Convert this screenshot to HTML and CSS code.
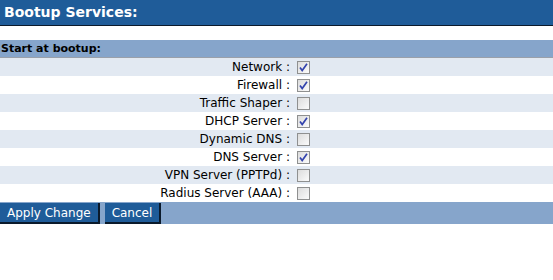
FILE: index.html
```html
<!DOCTYPE html>
<html lang="en">
<head>
    <meta charset="UTF-8">
    <title>Bootup Services</title>
    <link rel="stylesheet" href="styles.css">
</head>
<body>
    <div class="page-title">Bootup Services:</div>

    <form class="services">
        <div class="section-head">Start at bootup:</div>

        <div class="row">
            <label class="name">Network :</label>
            <span class="check on"><svg viewBox="0 0 11 11"><path d="M2 5.5 L4.2 8.5 L9 1.8" /></svg></span>
        </div>
        <div class="row">
            <label class="name">Firewall :</label>
            <span class="check on"><svg viewBox="0 0 11 11"><path d="M2 5.5 L4.2 8.5 L9 1.8" /></svg></span>
        </div>
        <div class="row">
            <label class="name">Traffic Shaper :</label>
            <span class="check"></span>
        </div>
        <div class="row">
            <label class="name">DHCP Server :</label>
            <span class="check on"><svg viewBox="0 0 11 11"><path d="M2 5.5 L4.2 8.5 L9 1.8" /></svg></span>
        </div>
        <div class="row">
            <label class="name">Dynamic DNS :</label>
            <span class="check"></span>
        </div>
        <div class="row">
            <label class="name">DNS Server :</label>
            <span class="check on"><svg viewBox="0 0 11 11"><path d="M2 5.5 L4.2 8.5 L9 1.8" /></svg></span>
        </div>
        <div class="row">
            <label class="name">VPN Server (PPTPd) :</label>
            <span class="check"></span>
        </div>
        <div class="row">
            <label class="name">Radius Server (AAA) :</label>
            <span class="check"></span>
        </div>

        <div class="actions">
            <button type="button" class="btn">Apply Change</button>
            <button type="button" class="btn">Cancel</button>
        </div>
    </form>
</body>
</html>
```

FILE: styles.css
```css
* {
    margin: 0;
    padding: 0;
    box-sizing: border-box;
}

body {
    font-family: "DejaVu Sans", Verdana, sans-serif;
    font-size: 12px;
    color: #000;
    background: #fff;
}

.page-title {
    height: 26px;
    padding: 4px 0 0 4px;
    background: #1f5c99;
    border-bottom: 1px solid #0b1a2b;
    color: #fff;
    font-size: 14px;
    font-weight: bold;
}

.services {
    margin-top: 14px;
}

.section-head {
    height: 18px;
    padding: 2px 0 0 1px;
    background: #86a5cb;
    border-bottom: 1px solid #9aa0aa;
    font-size: 11px;
    font-weight: bold;
}

.row {
    display: flex;
    align-items: center;
    height: 18px;
    background: #e2e9f2;
}

.row:nth-of-type(odd) {
    background: #fff;
}

.name {
    width: 292px;
    text-align: right;
    padding-right: 2px;
}

.check {
    display: block;
    width: 13px;
    height: 13px;
    margin-left: 5px;
    border: 1px solid #8f9090;
    background: linear-gradient(135deg, #dcdcdc, #fbfbfb);
}

.check svg {
    display: block;
    width: 11px;
    height: 11px;
}

.check path {
    fill: none;
    stroke: #3343ad;
    stroke-width: 1.7;
}

.actions {
    display: flex;
    gap: 5px;
    height: 22px;
    padding-top: 1px;
    background: #86a5cb;
}

.btn {
    height: 21px;
    padding: 0 7px;
    background: #1f5c99;
    border: none;
    border-right: 2px solid #0b1a2b;
    border-bottom: 2px solid #0b1a2b;
    color: #fff;
    font-family: "DejaVu Sans", Verdana, sans-serif;
    font-size: 12px;
}
```
